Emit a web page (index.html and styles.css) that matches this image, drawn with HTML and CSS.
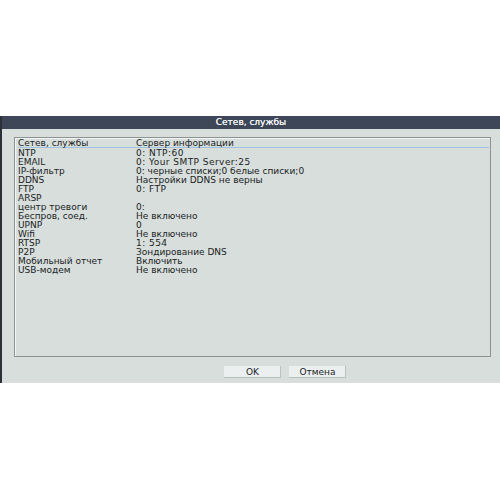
FILE: index.html
```html
<!DOCTYPE html>
<html lang="ru">
<head>
<meta charset="utf-8">
<title>Сетев, службы</title>
<link rel="stylesheet" href="styles.css">
</head>
<body>
<div class="dialog">
  <div class="titlebar">Сетев, службы</div>
  <div class="content">
    <div class="panel">
      <div class="row head"><span class="name">Сетев, службы</span><span class="val">Сервер информации</span></div>
      <div class="row"><span class="name">NTP</span><span class="val lat">0: NTP:60</span></div>
      <div class="row"><span class="name">EMAIL</span><span class="val lat">0: Your SMTP Server:25</span></div>
      <div class="row"><span class="name">IP-фильтр</span><span class="val">0: черные списки;0 белые списки;0</span></div>
      <div class="row"><span class="name">DDNS</span><span class="val">Настройки DDNS не верны</span></div>
      <div class="row"><span class="name">FTP</span><span class="val lat">0: FTP</span></div>
      <div class="row"><span class="name">ARSP</span><span class="val"></span></div>
      <div class="row"><span class="name">центр тревоги</span><span class="val">0:</span></div>
      <div class="row"><span class="name">Беспров, соед.</span><span class="val">Не включено</span></div>
      <div class="row"><span class="name">UPNP</span><span class="val">0</span></div>
      <div class="row"><span class="name">Wifi</span><span class="val">Не включено</span></div>
      <div class="row"><span class="name">RTSP</span><span class="val lat">1: 554</span></div>
      <div class="row"><span class="name">P2P</span><span class="val">Зондирование DNS</span></div>
      <div class="row"><span class="name">Мобильный отчет</span><span class="val">Включить</span></div>
      <div class="row"><span class="name">USB-модем</span><span class="val">Не включено</span></div>
    </div>
    <div class="buttons">
      <button class="btn">OK</button>
      <button class="btn">Отмена</button>
    </div>
  </div>
</div>
</body>
</html>
```

FILE: styles.css
```css
html, body {
  margin: 0;
  padding: 0;
  background: #ffffff;
}

body {
  font-family: "DejaVu Sans", "Liberation Sans", sans-serif;
  font-size: 9px;
  color: #202324;
}

.dialog {
  margin-top: 116px;
  width: 500px;
  height: 267px;
  display: flex;
  flex-direction: column;
  background: #d7dedb;
  border-left: 2px solid #2c3138;
  box-sizing: border-box;
}

.titlebar {
  height: 13px;
  line-height: 13px;
  background: #3d4757;
  color: #f4f6f8;
  text-align: center;
  font-size: 9px;
  text-shadow: 0 0 0.6px #ffffff;
}

.content {
  flex: 1;
  display: flex;
  flex-direction: column;
  padding: 8px 9px 0 12px;
}

.panel {
  height: 220px;
  box-sizing: border-box;
  border: 1px solid #8b9292;
  box-shadow: inset 1px 1px 0 #f2f5f4;
  padding: 0 0 0 3px;
  display: flex;
  flex-direction: column;
}

.row {
  display: flex;
  height: 9px;
  line-height: 9px;
}

.row.head {
  height: 9px;
  margin-bottom: 1px;
  border-bottom: 1px solid #9fc2e0;
  margin-right: 1px;
  line-height: 10px;
}

.name {
  width: 118px;
  flex: none;
}

.val {
  flex: 1;
  white-space: nowrap;
}

.val.lat {
  letter-spacing: 0.45px;
}

.buttons {
  display: flex;
  gap: 8px;
  padding-top: 9px;
  padding-left: 210px;
}

.btn {
  width: 57px;
  height: 12px;
  padding: 0;
  border: none;
  background: #eceff0;
  box-shadow: inset -1px -1px 0 #b9c0c1;
  font-family: "DejaVu Sans", "Liberation Sans", sans-serif;
  font-size: 9px;
  line-height: 12px;
  color: #202324;
}
```
